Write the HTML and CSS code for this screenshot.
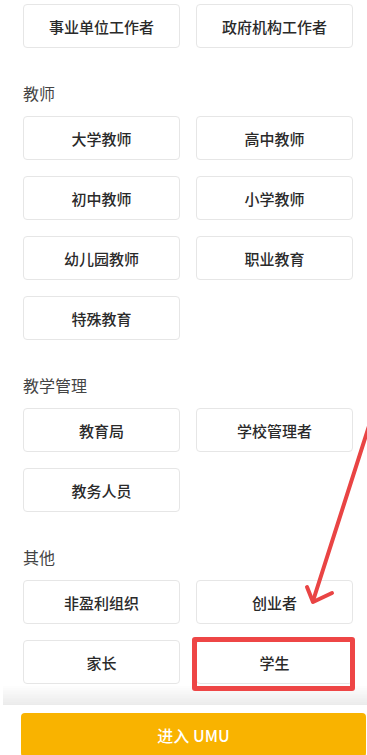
FILE: index.html
```html
<!DOCTYPE html>
<html lang="zh-CN">
<head>
    <meta charset="UTF-8">
    <meta name="viewport" content="width=device-width, initial-scale=1.0">
    <title>选择身份</title>
    <link rel="stylesheet" href="styles.css">
</head>
<body>
    <div class="page">
        <div class="role-grid">
            <div class="role">事业单位工作者</div>
            <div class="role">政府机构工作者</div>
        </div>

        <h2 class="group-title">教师</h2>
        <div class="role-grid">
            <div class="role">大学教师</div>
            <div class="role">高中教师</div>
            <div class="role">初中教师</div>
            <div class="role">小学教师</div>
            <div class="role">幼儿园教师</div>
            <div class="role">职业教育</div>
            <div class="role">特殊教育</div>
        </div>

        <h2 class="group-title">教学管理</h2>
        <div class="role-grid">
            <div class="role">教育局</div>
            <div class="role">学校管理者</div>
            <div class="role">教务人员</div>
        </div>

        <h2 class="group-title">其他</h2>
        <div class="role-grid">
            <div class="role">非盈利组织</div>
            <div class="role">创业者</div>
            <div class="role">家长</div>
            <div class="role marked">学生</div>
        </div>
    </div>

    <div class="footer">
        <button class="enter-button">进入 UMU</button>
    </div>

    <!-- annotation marks drawn on the screenshot -->
    <div class="mark-box"></div>
    <svg class="arrow" width="367" height="755" viewBox="0 0 367 755">
        <path d="M369 426 L313 601" fill="none" stroke="#e94444" stroke-width="4" stroke-linecap="round"/>
        <path d="M307 587 L313 602 L332 593" fill="none" stroke="#e94444" stroke-width="4" stroke-linecap="round" stroke-linejoin="round"/>
    </svg>
</body>
</html>
```

FILE: styles.css
```css
* {
  margin: 0;
  padding: 0;
  box-sizing: border-box;
}

body {
  font-family: "Noto Sans CJK SC", "Noto Sans", sans-serif;
  background-color: #fff;
  color: #333;
}

.page {
  padding: 4px 15px 0 23px;
}

/* Two-column grid of role buttons */
.role-grid {
  display: grid;
  grid-template-columns: 157px 157px;
  column-gap: 16px;
  row-gap: 16px;
}

.role {
  height: 44px;
  border: 1px solid #e6e6e6;
  border-radius: 4px;
  display: flex;
  justify-content: center;
  align-items: center;
  font-size: 15px;
  font-weight: 500;
  color: #2a2a2a;
}

.group-title {
  font-size: 16px;
  font-weight: 400;
  line-height: 20px;
  color: #444;
  margin: 35px 0 13px;
}

.footer {
  position: fixed;
  left: 3px;
  right: 0;
  bottom: 0;
  height: 50px;
  background-color: #fff;
  padding: 8px 0 0 18px;
}

/* fade over the bottom of the list */
.footer::before {
  content: "";
  position: absolute;
  left: 0;
  right: 0;
  top: -20px;
  height: 20px;
  background: linear-gradient(rgba(0, 0, 0, 0), rgba(0, 0, 0, 0.08));
}

.enter-button {
  width: 345px;
  height: 44px;
  border: none;
  border-radius: 4px;
  background-color: #f9b300;
  color: #fff;
  font-family: "Noto Sans CJK SC", "Noto Sans", sans-serif;
  font-size: 16px;
  font-weight: 500;
}

/* red box drawn around the chosen role */
.mark-box {
  position: absolute;
  left: 192px;
  top: 637px;
  width: 163px;
  height: 54px;
  border: 5px solid #ee4646;
  border-radius: 3px;
}

.arrow {
  position: absolute;
  left: 0;
  top: 0;
  pointer-events: none;
}
```
